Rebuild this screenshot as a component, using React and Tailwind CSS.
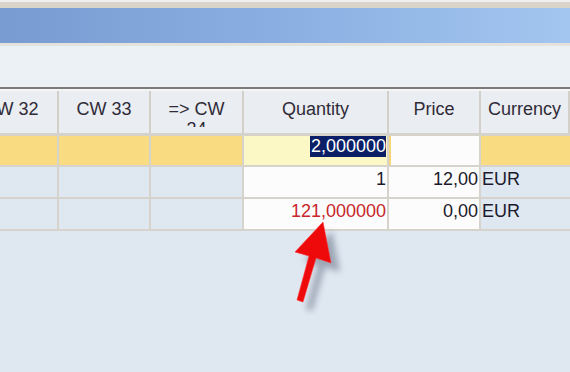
const cols = [
  { key: 'cw32', label: 'CW 32', w: 'w-[94px] -ml-[35px]' },
  { key: 'cw33', label: 'CW 33', w: 'w-[92px]' },
  { key: 'cw34', label: '=> CW 34', w: 'w-[93px]' },
  { key: 'qty', label: 'Quantity', w: 'w-[145px]' },
  { key: 'price', label: 'Price', w: 'w-[92px]' },
  { key: 'cur', label: 'Currency', w: 'flex-1' },
];

const rows = [
  { h: 'h-[31px]', bg: 'bg-[#f9db81]', qty: '2,000000', selected: true, qtyBg: 'bg-[#fbf8c6]', price: '', cur: '' },
  { h: 'h-[32px]', bg: 'bg-[#dfe7f1]', qty: '1', qtyBg: 'bg-[#fcfcfc]', price: '12,00', cur: 'EUR' },
  { h: 'h-[32px]', bg: 'bg-[#dfe7f1]', qty: '121,000000', red: true, qtyBg: 'bg-[#fcfcfc]', price: '0,00', cur: 'EUR' },
];

const Arrow = () => (
  <svg className="absolute left-0 top-0" width="570" height="372" viewBox="0 0 570 372">
    <defs>
      <filter id="blur" x="-50%" y="-50%" width="200%" height="200%">
        <feGaussianBlur stdDeviation="3" />
      </filter>
    </defs>
    <g transform="translate(9 9)" filter="url(#blur)" opacity="0.6">
      <polygon fill="#6f7a8c" points="323,222 331,263 316,258 303,302 297,300 309,256 295,252" />
    </g>
    <polygon
      fill="#ee0a0a"
      stroke="#ff3030"
      strokeWidth="0.6"
      points="323,222 331,263 316,258 303,302 297,300 309,256 295,252"
    />
  </svg>
);

export default function App() {
  return (
    <div className="relative w-[570px] h-[372px] overflow-hidden bg-[#dfe7f1] font-['Liberation_Sans',Arial,sans-serif]">
      {/* window chrome */}
      <div className="h-[2px] bg-[#efefef]" />
      <div className="h-[6px] bg-[#d9d4c9]" />
      <div className="h-[35px] bg-gradient-to-r from-[#789cd2] via-[#8bafe1] to-[#a3c6f0]" />
      <div className="h-[3px] bg-[#e3e2dd]" />
      <div className="h-[41px] bg-[#ecf1f6]" />
      <div className="h-[2px] bg-[#7b7b7b]" />

      {/* header */}
      <div className="flex h-[47px] overflow-hidden border-t-2 border-b-[3px] border-t-[#f5f5f5] border-b-[#d6d3cc] bg-[#eaedf1]">
        {cols.map((c) => (
          <div key={c.key} className={`${c.w} shrink-0 border-r-2 border-[#d3d0ca] pt-[8px] px-1`}>
            <div className="h-[28px] overflow-hidden text-center text-[18px] leading-[20px] text-[#302b38]">
              {c.key === 'cw34' ? (
                <>
                  =&gt; CW
                  <br />
                  34
                </>
              ) : (
                c.label
              )}
            </div>
          </div>
        ))}
      </div>

      {/* rows */}
      {rows.map((r, i) => (
        <div key={i} className={`flex ${r.h} border-b-2 border-[#d6d3cc] ${r.bg} text-[18px] leading-[20px] text-[#1c1a2c]`}>
          <div className="w-[94px] -ml-[35px] shrink-0 border-r-2 border-[#d6d3cc]" />
          <div className="w-[92px] shrink-0 border-r-2 border-[#d6d3cc]" />
          <div className="w-[93px] shrink-0 border-r-2 border-[#d6d3cc]" />
          <div className={`w-[145px] shrink-0 border-r-2 border-[#d6d3cc] ${r.qtyBg} text-right pr-[1px] ${r.selected ? 'pt-0' : 'pt-[2px]'}`}>
            {r.selected ? (
              <span className="inline-block bg-[#0b1f66] text-white leading-[21px] pl-[1px]">{r.qty}</span>
            ) : (
              <span className={r.red ? 'text-[#c8262a]' : ''}>{r.qty}</span>
            )}
          </div>
          <div className={`w-[92px] shrink-0 border-r-2 border-[#d6d3cc] bg-[#fcfcfc] text-right pr-[1px] pt-[2px] ${r.selected ? 'border-l-2 border-l-[#f5d77a]' : ''}`}>
            {r.price}
          </div>
          <div className="flex-1 pl-[1px] pt-[2px]">{r.cur}</div>
        </div>
      ))}

      <Arrow />
    </div>
  );
}
